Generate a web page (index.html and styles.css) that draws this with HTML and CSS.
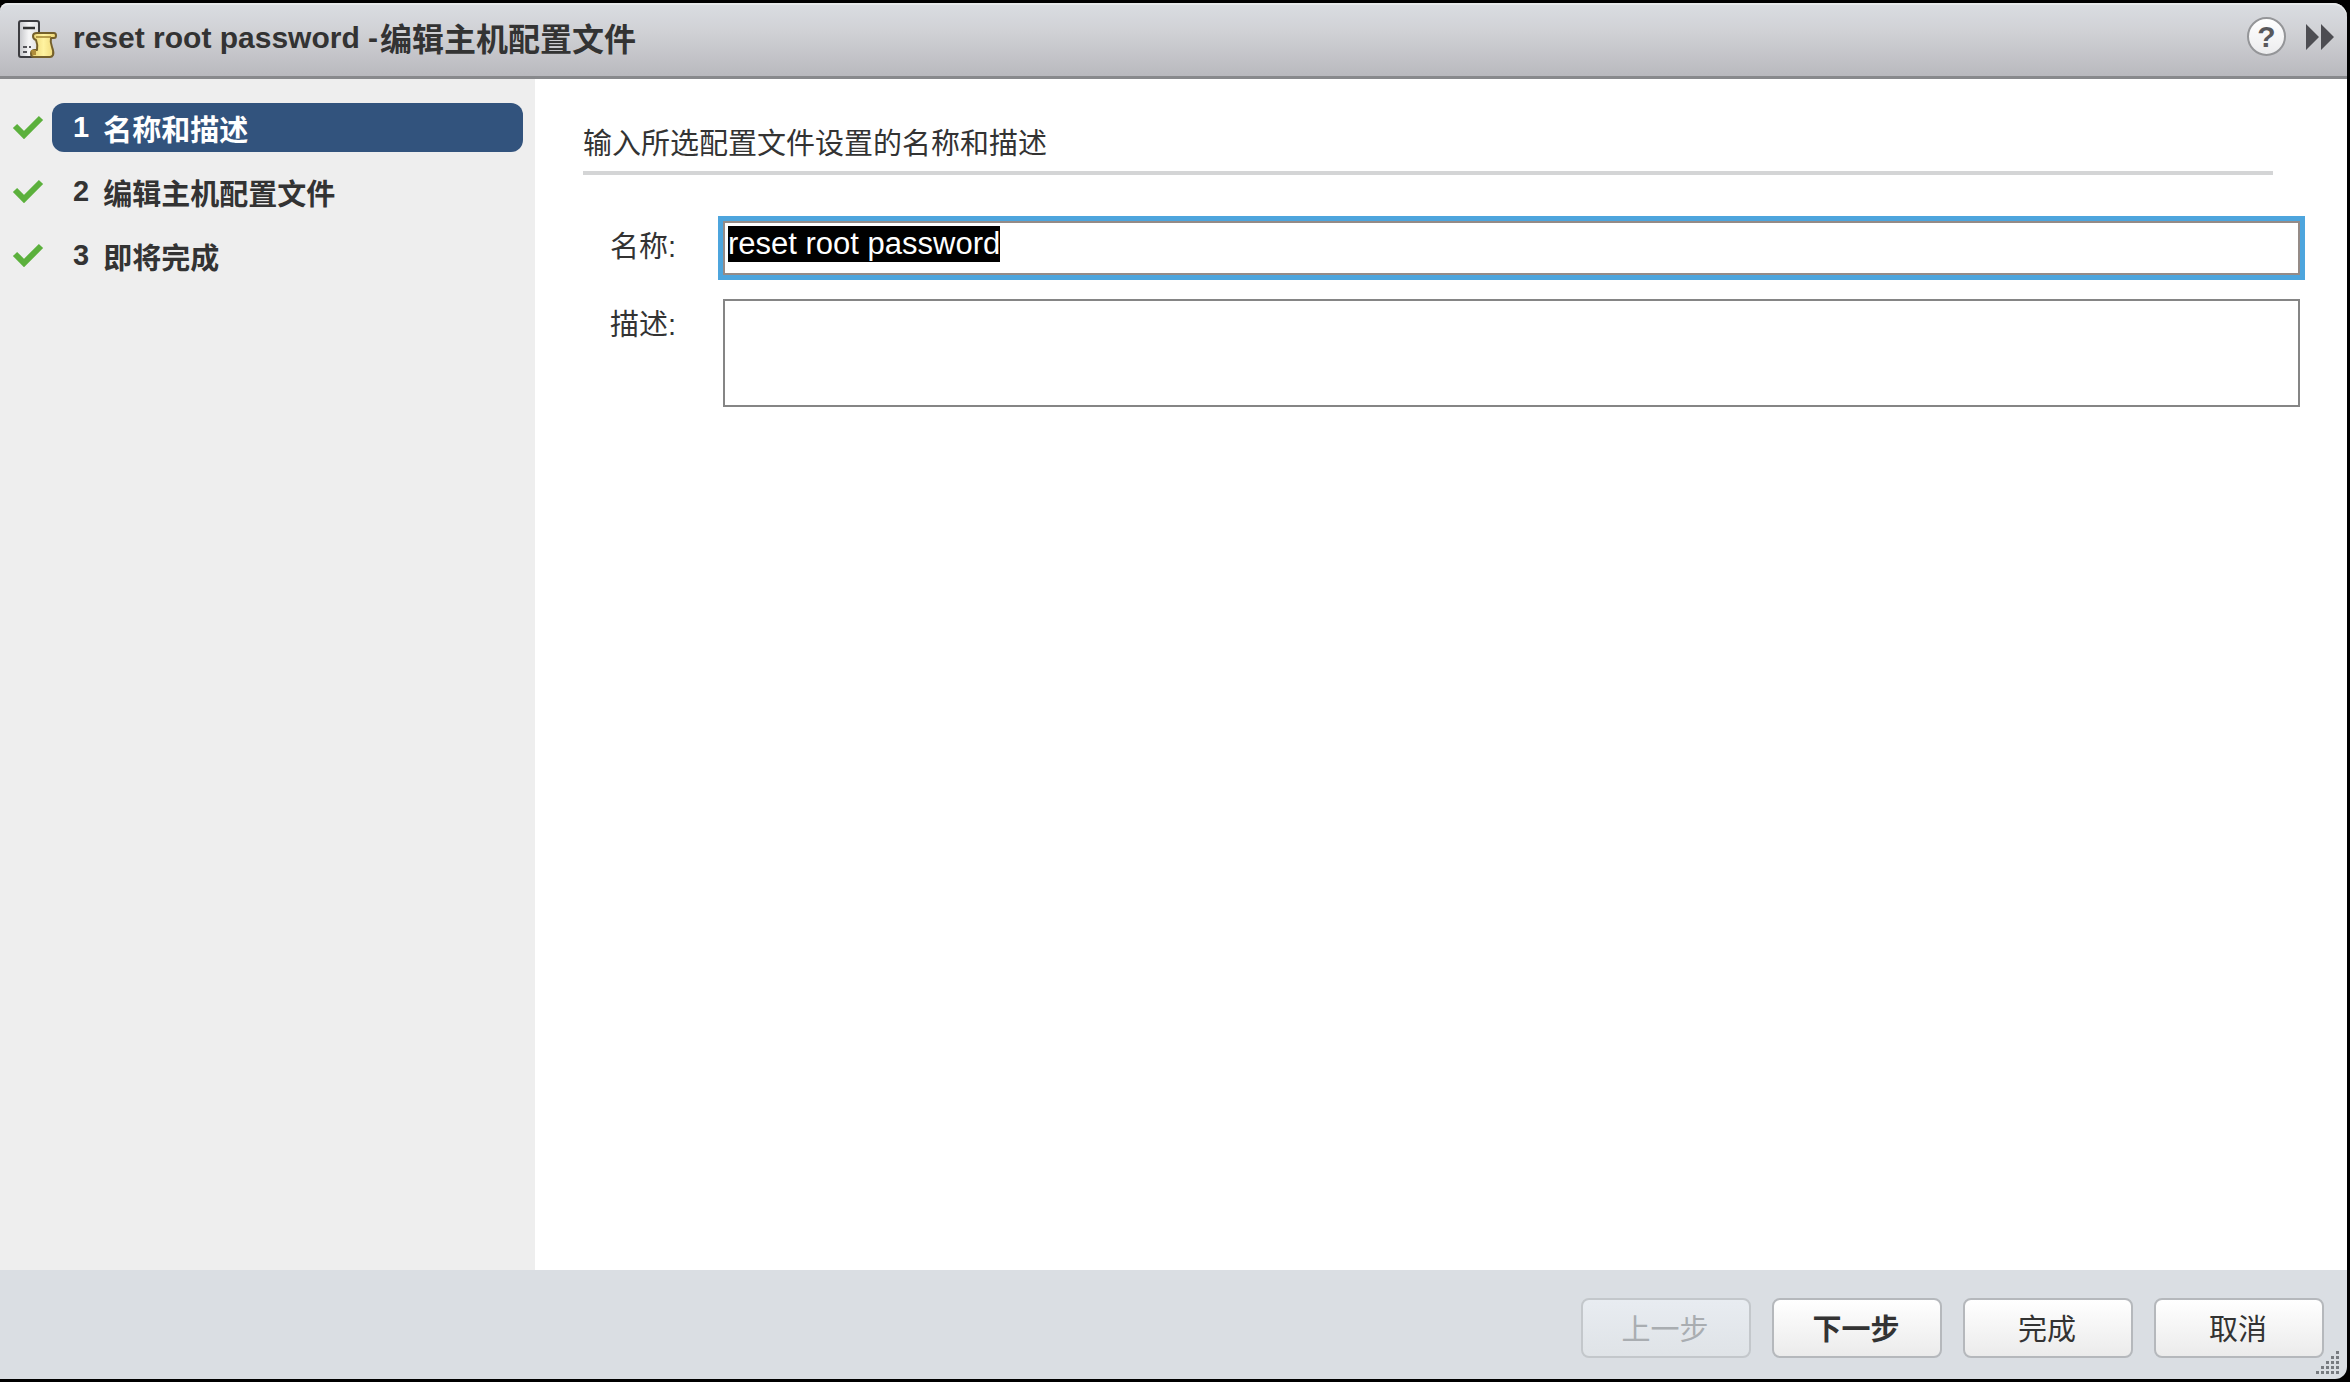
FILE: index.html
```html
<!DOCTYPE html>
<html lang="zh-CN">
<head>
<meta charset="utf-8">
<title>reset root password - 编辑主机配置文件</title>
<link rel="stylesheet" href="styles.css">
</head>
<body>
<form class="dialog">
  <header class="titlebar">
    <svg class="title-icon" viewBox="0 0 42 40" aria-hidden="true">
      <defs>
        <linearGradient id="server" x1="0" x2="1"><stop offset="0" stop-color="#c4c5c9"/><stop offset="0.5" stop-color="#f6f6f7"/><stop offset="1" stop-color="#dedee0"/></linearGradient>
        <linearGradient id="scroll" x1="0" x2="1"><stop offset="0" stop-color="#e8d070"/><stop offset="0.5" stop-color="#fff3a0"/><stop offset="1" stop-color="#ecd473"/></linearGradient>
      </defs>
      <rect x="2" y="2" width="20" height="36" rx="2" fill="url(#server)" stroke="#3c3c40" stroke-width="2"/>
      <path d="M6 9h12" stroke="#333" stroke-width="2.5"/>
      <path d="M6 28h4M12 28h2M6 33h4" stroke="#55555a" stroke-width="2"/>
      <path d="M20 14h17q2 0 2 2.500t-2 2.500h-3q-1 4 1 9t1 8q-1 2-3 2H17q-3 0-3-3.500t4-3.500h2q1-5-1-10-3-1-3-4t4-3z" fill="url(#scroll)" stroke="#75602b" stroke-width="2" stroke-linejoin="round"/>
      <path d="M19 18h15" fill="none" stroke="#a18230" stroke-width="1.500"/>
      <path d="M14 31h5v5h-4z" fill="#b08d3a"/>
    </svg>
    <h1 class="title"><span>reset root password -</span><span class="title-task">编辑主机配置文件</span></h1>
    <button class="help" type="button" aria-label="帮助">?</button>
    <button class="expand" type="button" aria-label="展开">
      <svg viewBox="0 0 28 26"><path d="M0 0v26l13-13zM15 0v26l13-13z" fill="#4d4d52"/></svg>
    </button>
  </header>

  <div class="content">
    <nav class="steps">
      <a class="step" href="#name">
        <svg class="check" viewBox="0 0 32 24" aria-hidden="true"><path d="M3 11l9 9L29 3" fill="none" stroke="#5bb03c" stroke-width="6"/></svg>
        <span class="step-box current"><span class="number">1</span><span class="step-name">名称和描述</span></span>
      </a>
      <a class="step" href="#edit">
        <svg class="check" viewBox="0 0 32 24" aria-hidden="true"><path d="M3 11l9 9L29 3" fill="none" stroke="#5bb03c" stroke-width="6"/></svg>
        <span class="step-box"><span class="number">2</span><span class="step-name">编辑主机配置文件</span></span>
      </a>
      <a class="step" href="#ready">
        <svg class="check" viewBox="0 0 32 24" aria-hidden="true"><path d="M3 11l9 9L29 3" fill="none" stroke="#5bb03c" stroke-width="6"/></svg>
        <span class="step-box"><span class="number">3</span><span class="step-name">即将完成</span></span>
      </a>
    </nav>

    <main class="panel">
      <h2 class="heading">输入所选配置文件设置的名称和描述</h2>
      <div class="fields">
        <label for="name">名称:</label>
        <input class="box name" id="name" type="text" value="reset root password" autocomplete="off" autofocus>
        <label for="description">描述:</label>
        <textarea class="box description" id="description"></textarea>
      </div>
    </main>
  </div>

  <footer class="actions">
    <button class="action" type="button" disabled>上一步</button>
    <button class="action primary" type="button">下一步</button>
    <button class="action" type="submit">完成</button>
    <button class="action" type="button">取消</button>
    <svg class="grip" viewBox="0 0 25 25" aria-hidden="true">
      <g fill="none" stroke="#777b80" stroke-width="3" stroke-dasharray="3 2">
        <path d="M0 23.500h23M5 18.500h18M10 13.500h13M15 8.500h8M20 3.500h3"/>
      </g>
    </svg>
  </footer>
</form>
<script src="script.js"></script>
</body>
</html>
```
FILE: styles.css
```css
* {
  box-sizing: border-box;
}

body {
  margin: 0;
  background: #000;
  color: #333;
  font: 29px/36px "Liberation Sans", "Noto Sans CJK SC", sans-serif;
}

button,
input,
textarea {
  margin: 0;
  font: inherit;
  color: inherit;
}

.dialog {
  display: flex;
  flex-direction: column;
  min-height: 100vh;
  border: solid #000;
  border-width: 3px 3px 3px 0;
}

/* Title bar */
.titlebar {
  display: flex;
  align-items: center;
  height: 76px;
  padding: 0 13px 6px 17px;
  border-bottom: 3px solid #88898c;
  border-radius: 8px 14px 0 0;
  background: linear-gradient(#dadde2, #d0d1d5 40%, #b9b9be);
  box-shadow: inset 0 2px #e6e8ea;
}

.title-icon {
  width: 42px;
  height: 40px;
  margin-top: 5px;
}

.title {
  display: flex;
  gap: 2px;
  flex: 1;
  margin: 4px 0 0 14px;
  font-size: 30px;
}

.title-task {
  padding-top: 2px;
  font-size: 32px;
}

.help {
  width: 39px;
  height: 39px;
  padding: 0;
  border: 2px solid #949598;
  border-radius: 50%;
  background: linear-gradient(#fff, #ececee);
  color: #58585c;
  font-size: 30px;
  font-weight: bold;
  line-height: 35px;
}

.expand {
  display: flex;
  margin-left: 20px;
  padding: 0;
  border: 0;
  background: none;
}

.expand svg {
  width: 28px;
  height: 26px;
}

/* Steps and form */
.content {
  display: flex;
  flex: 1;
}

.steps {
  display: flex;
  flex-direction: column;
  gap: 15px;
  width: 535px;
  padding: 24px 12px;
  background: #eee;
}

.step {
  display: flex;
  align-items: center;
  gap: 8px;
  color: inherit;
  font-weight: bold;
  text-decoration: none;
}

.check {
  width: 32px;
  height: 24px;
  margin-bottom: 2px;
}

.step-box {
  display: flex;
  flex: 1;
  align-items: center;
  gap: 14px;
  height: 49px;
  padding-left: 21px;
  border-radius: 12px;
}

.current {
  background: #32537d;
  color: #fff;
}

.number {
  padding-bottom: 2px;
}

.step-name {
  padding-top: 6px;
}

.panel {
  flex: 1;
  padding: 47px 47px 48px 48px;
  background: #fff;
}

.heading {
  margin: 0 27px 46px 0;
  padding-bottom: 9px;
  border-bottom: 4px solid #d4d5d6;
  font-size: 29px;
  font-weight: normal;
  line-height: 36px;
}

.fields {
  display: grid;
  grid-template-columns: 113px 1fr;
  row-gap: 24px;
  padding-left: 27px;
}

.fields label {
  padding-top: 8px;
}

.box {
  display: block;
  width: 100%;
  border: 2px solid #858585;
  border-radius: 0;
  background: #fff;
  outline: 0;
  resize: none;
}

.box:focus {
  border-color: #958b87;
  box-shadow: 0 0 0 5px #4da5dd;
}

.name {
  height: 54px;
  padding: 3px 3px 11px;
  font-size: 31px;
}

.name::selection {
  background: #000;
  color: #fff;
}

.description {
  height: 108px;
  padding: 3px;
}

/* Buttons */
.actions {
  position: relative;
  display: flex;
  justify-content: flex-end;
  gap: 21px;
  padding: 28px 23px 21px;
  border-radius: 0 0 12px 0;
  background: #dadee3;
}

.action {
  width: 170px;
  height: 60px;
  padding: 4px 2px 0 0;
  border: 2px solid #b5b8bc;
  border-radius: 8px;
  background: linear-gradient(#fff, #ebebeb);
}

.action:disabled {
  border-color: #c3c7cb;
  background: linear-gradient(#e8ecf1, #dfe3e7);
  color: #a9adb1;
}

.primary {
  font-weight: bold;
}

.grip {
  position: absolute;
  right: 6px;
  bottom: 5px;
  width: 25px;
  height: 25px;
}
```
FILE: script.js
```js
const nameField = document.getElementById("name");
nameField.focus();
nameField.select();
```
